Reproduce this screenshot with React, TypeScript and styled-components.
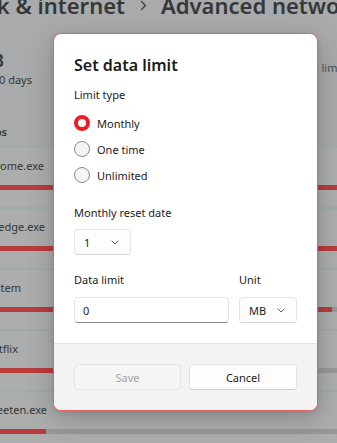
import React from "react";
import styled, { createGlobalStyle } from "styled-components";

const GlobalStyle = createGlobalStyle`
  html, body { margin: 0; padding: 0; }
  body {
    width: 337px;
    height: 443px;
    overflow: hidden;
    font-family: "Noto Sans", "Segoe UI", sans-serif;
  }
  * { box-sizing: border-box; }
`;

const Page = styled.div`
  position: relative;
  width: 337px;
  height: 443px;
  overflow: hidden;
  background: #a8aaab;
  color: #353737;
`;

const EdgeText = styled.div<{ $edge: number }>`
  display: flex;
  justify-content: flex-end;
  width: ${(p) => p.$edge}px;
  white-space: nowrap;
  flex: none;
`;

const Breadcrumb = styled.div`
  display: flex;
  align-items: center;
  height: 24px;
  margin-top: -7px;
  font-size: 22px;
  line-height: 24px;
  font-weight: 600;
  color: #363838;
  white-space: nowrap;
`;

const CrumbChevron = styled.svg`
  flex: none;
  margin: 0 14px 0 15px;
`;

const SummaryRow = styled.div`
  display: flex;
  justify-content: space-between;
  align-items: flex-start;
  margin-top: 33px;
`;

const SummaryCol = styled.div`
  display: flex;
  flex-direction: column;
`;

const BigValue = styled(EdgeText)`
  font-size: 17px;
  line-height: 22px;
  font-weight: 600;
`;

const SmallText = styled(EdgeText)`
  font-size: 11px;
  line-height: 16px;
`;

const LimitNote = styled.div`
  flex: none;
  width: 80px;
  margin-right: -34px;
  margin-top: 10px;
  font-size: 11px;
  line-height: 16px;
  color: #4c4e4e;
  white-space: nowrap;
`;

const SectionTitle = styled(EdgeText)`
  margin-top: 36px;
  font-size: 11px;
  line-height: 16px;
  font-weight: 600;
`;

const AppList = styled.div`
  margin-top: 6px;
  display: flex;
  flex-direction: column;
`;

const AppRow = styled.div`
  border-top: 2px solid #a1abaa;
  padding: 10px 0 17px;
  background: #acaeae;
`;

const AppName = styled(EdgeText)`
  font-size: 11px;
  line-height: 16px;
  color: #333535;
`;

const UsageTrack = styled.div`
  margin-top: 11px;
  height: 5px;
  width: 100%;
  background: #969898;
`;

const UsageFill = styled.div`
  height: 100%;
  background: #b93c3c;
`;

const Dialog = styled.div`
  position: absolute;
  left: 53px;
  top: 33px;
  width: 265px;
  border: 1px solid #e46262;
  border-radius: 8px;
  background: #ffffff;
  overflow: hidden;
  display: flex;
  flex-direction: column;
  box-shadow: 0 8px 28px rgba(0, 0, 0, 0.2), 0 2px 6px rgba(0, 0, 0, 0.1);
  color: #1b1b1b;
`;

const DialogBody = styled.div`
  padding: 21px 20px 20px;
  display: flex;
  flex-direction: column;
`;

const Title = styled.h2`
  margin: 0;
  font-size: 16px;
  line-height: 20px;
  font-weight: 600;
`;

const FieldLabel = styled.div<{ $top?: number }>`
  margin-top: ${(p) => p.$top ?? 0}px;
  font-size: 11px;
  line-height: 16px;
`;

const RadioGroup = styled.div`
  margin-top: 7px;
  display: flex;
  flex-direction: column;
`;

const RadioRow = styled.label`
  height: 26px;
  display: flex;
  align-items: center;
  gap: 7px;
  font-size: 11px;
`;

const RadioDot = styled.span<{ $checked?: boolean }>`
  width: 16px;
  height: 16px;
  border-radius: 50%;
  flex: none;
  background: ${(p) => (p.$checked ? "#ffffff" : "#f4f4f4")};
  border: ${(p) => (p.$checked ? "4px solid #ee1c25" : "1px solid #8a8a8a")};
`;

const Section = styled.div`
  margin-top: 17px;
  display: flex;
  flex-direction: column;
`;

const Select = styled.div<{ $width: number; $top?: number }>`
  margin-top: ${(p) => p.$top ?? 0}px;
  width: ${(p) => p.$width}px;
  height: 26px;
  display: flex;
  align-items: center;
  justify-content: space-between;
  padding: 0 11px 0 9px;
  border: 1px solid #e6e6e6;
  border-bottom-color: #d4d4d4;
  border-radius: 4px;
  background: #fdfdfd;
  font-size: 11px;
`;

const FieldGrid = styled.div`
  margin-top: 17px;
  display: grid;
  grid-template-columns: 155px 58px;
  column-gap: 10px;
`;

const FieldCol = styled.div`
  display: flex;
  flex-direction: column;
`;

const TextInput = styled.input`
  margin-top: 9px;
  width: 100%;
  height: 26px;
  padding: 0 8px;
  border: 1px solid #e6e6e6;
  border-bottom: 1px solid #8d8d8d;
  border-radius: 4px;
  background: #ffffff;
  font-family: inherit;
  font-size: 11px;
  color: #1b1b1b;
  outline: none;
`;

const Footer = styled.div`
  border-top: 1px solid #e5e5e5;
  background: #f3f3f3;
  padding: 20px;
  display: grid;
  grid-template-columns: 107px 108px;
  column-gap: 8px;
`;

const Button = styled.button<{ $disabled?: boolean }>`
  height: 26px;
  border-radius: 4px;
  font-family: inherit;
  font-size: 11px;
  border: 1px solid #e4e4e4;
  border-bottom-color: ${(p) => (p.$disabled ? "#e4e4e4" : "#cdcdcd")};
  background: ${(p) => (p.$disabled ? "#f5f5f5" : "#fdfdfd")};
  color: ${(p) => (p.$disabled ? "#a3a3a3" : "#1b1b1b")};
  padding: 0;
`;

const Chevron = () => (
  <svg width="8" height="5" viewBox="0 0 8 5" fill="none">
    <path d="M1 1l3 3 3-3" stroke="#5c5c5c" strokeWidth="1" strokeLinecap="round" strokeLinejoin="round" />
  </svg>
);

const apps = [
  { name: "chrome.exe", edge: 44, used: 337 },
  { name: "msedge.exe", edge: 45, used: 337 },
  { name: "System", edge: 21, used: 332 },
  { name: "Netflix", edge: 18, used: 210 },
  { name: "Tweeten.exe", edge: 47, used: 46 },
];

export default function App() {
  return (
    <>
      <GlobalStyle />
      <Page>
        <Breadcrumb>
          <EdgeText $edge={125}>Network &amp; internet</EdgeText>
          <CrumbChevron width="7" height="11" viewBox="0 0 7 11" fill="none">
            <path d="M1.5 1.5l4 4-4 4" stroke="#3f4141" strokeWidth="1.3" strokeLinecap="round" strokeLinejoin="round" />
          </CrumbChevron>
          <span>Advanced network settings</span>
        </Breadcrumb>
        <SummaryRow>
          <SummaryCol>
            <BigValue $edge={4}>4.38 GB</BigValue>
            <SmallText $edge={32}>Last 30 days</SmallText>
          </SummaryCol>
          <LimitNote>Enter limit</LimitNote>
        </SummaryRow>
        <SectionTitle $edge={7}>Apps</SectionTitle>
        <AppList>
          {apps.map((a) => (
            <AppRow key={a.name}>
              <AppName $edge={a.edge}>{a.name}</AppName>
              <UsageTrack>
                <UsageFill style={{ width: `${a.used}px` }} />
              </UsageTrack>
            </AppRow>
          ))}
        </AppList>

        <Dialog role="dialog" aria-label="Set data limit">
          <DialogBody>
            <Title>Set data limit</Title>
            <FieldLabel $top={12}>Limit type</FieldLabel>
            <RadioGroup>
              <RadioRow>
                <RadioDot $checked />
                Monthly
              </RadioRow>
              <RadioRow>
                <RadioDot />
                One time
              </RadioRow>
              <RadioRow>
                <RadioDot />
                Unlimited
              </RadioRow>
            </RadioGroup>
            <Section>
              <FieldLabel>Monthly reset date</FieldLabel>
              <Select $width={57} $top={8}>
                <span>1</span>
                <Chevron />
              </Select>
            </Section>
            <FieldGrid>
              <FieldCol>
                <FieldLabel>Data limit</FieldLabel>
                <TextInput defaultValue="0" />
              </FieldCol>
              <FieldCol>
                <FieldLabel>Unit</FieldLabel>
                <Select $width={58} $top={9}>
                  <span>MB</span>
                  <Chevron />
                </Select>
              </FieldCol>
            </FieldGrid>
          </DialogBody>
          <Footer>
            <Button $disabled disabled>
              Save
            </Button>
            <Button>Cancel</Button>
          </Footer>
        </Dialog>
      </Page>
    </>
  );
}
